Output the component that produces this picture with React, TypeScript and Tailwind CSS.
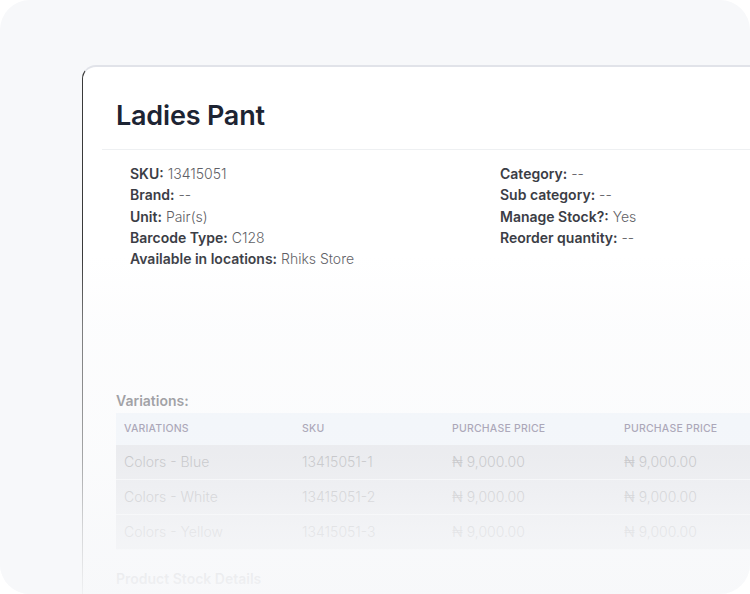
import React from 'react';

const LEFT_INFO = [
  { label: 'SKU:', value: '13415051' },
  { label: 'Brand:', value: '--' },
  { label: 'Unit:', value: 'Pair(s)' },
  { label: 'Barcode Type:', value: 'C128' },
  { label: 'Available in locations:', value: 'Rhiks Store' },
];

const RIGHT_INFO = [
  { label: 'Category:', value: '--' },
  { label: 'Sub category:', value: '--' },
  { label: 'Manage Stock?:', value: 'Yes' },
  { label: 'Reorder quantity:', value: '--' },
];

const VARIATIONS = [
  { name: 'Colors - Blue', sku: '13415051-1', price: '₦ 9,000.00' },
  { name: 'Colors - White', sku: '13415051-2', price: '₦ 9,000.00' },
  { name: 'Colors - Yellow', sku: '13415051-3', price: '₦ 9,000.00' },
];

function InfoRow({ label, value }: { label: string; value: string }) {
  return (
    <div className="leading-[21.25px] whitespace-nowrap">
      <span className="font-semibold text-[#3b3d45]">{label}</span>{' '}
      <span className="font-light text-[#5f5f66]">{value}</span>
    </div>
  );
}

export default function App() {
  return (
    <div className="w-[750px] h-[594px] bg-white font-['Inter',sans-serif]">
      <div className="relative w-full h-full rounded-[30px] bg-[#f7f8fa] overflow-hidden pl-[82px] pt-[65px]">
        <div className="h-full w-[700px] bg-white rounded-tl-[14px] border-t-2 border-l border-t-[#e1e3e9] border-l-[#3a3a3a] pl-[19px]">
          <div className="pl-[14px] pt-[33px] pb-[17px]">
            <h1 className="text-[27px] leading-[32px] font-semibold text-[#1d2433] tracking-[-0.2px]">Ladies Pant</h1>
          </div>
          <div className="border-t border-[#eef0f2]" />

          <div className="grid grid-cols-[370px_1fr] pl-[28px] pt-[13px] text-[14px]">
            <div>
              {LEFT_INFO.map((row) => (
                <InfoRow key={row.label} {...row} />
              ))}
            </div>
            <div>
              {RIGHT_INFO.map((row) => (
                <InfoRow key={row.label} {...row} />
              ))}
            </div>
          </div>

          <div className="pl-[14px] mt-[122px]">
            <h2 className="text-[14px] leading-[20px] font-semibold text-[#595960]">Variations:</h2>
            <div className="mt-[2px] text-[14px]">
              <div className="grid grid-cols-[178px_150px_172px_1fr] h-[32px] items-center bg-[#eff4fa] pl-[8px] text-[10.5px] font-medium uppercase text-[#5e5476] tracking-[0.2px]">
                <div>Variations</div>
                <div>SKU</div>
                <div>Purchase Price</div>
                <div>Purchase Price</div>
              </div>
              {VARIATIONS.map((v) => (
                <div
                  key={v.sku}
                  className="grid grid-cols-[178px_150px_172px_1fr] h-[35px] items-center bg-[#dcdde2] border-b border-[#f4f5f7] pl-[8px] pb-[2px] font-light text-[#8a8a8e]"
                >
                  <div>{v.name}</div>
                  <div>{v.sku}</div>
                  <div>{v.price}</div>
                  <div>{v.price}</div>
                </div>
              ))}
            </div>
            <h2 className="mt-[19px] text-[14px] leading-[20px] font-semibold text-[#6a6a70]">Product Stock Details</h2>
          </div>
        </div>

        <div className="pointer-events-none absolute inset-0 bg-[linear-gradient(to_bottom,rgba(247,248,250,0)_0%,rgba(247,248,250,0)_43%,rgba(247,248,250,0.35)_55%,rgba(247,248,250,0.45)_67%,rgba(247,248,250,0.57)_77%,rgba(247,248,250,0.82)_89%,rgba(247,248,250,0.96)_100%)]" />
      </div>
    </div>
  );
}
